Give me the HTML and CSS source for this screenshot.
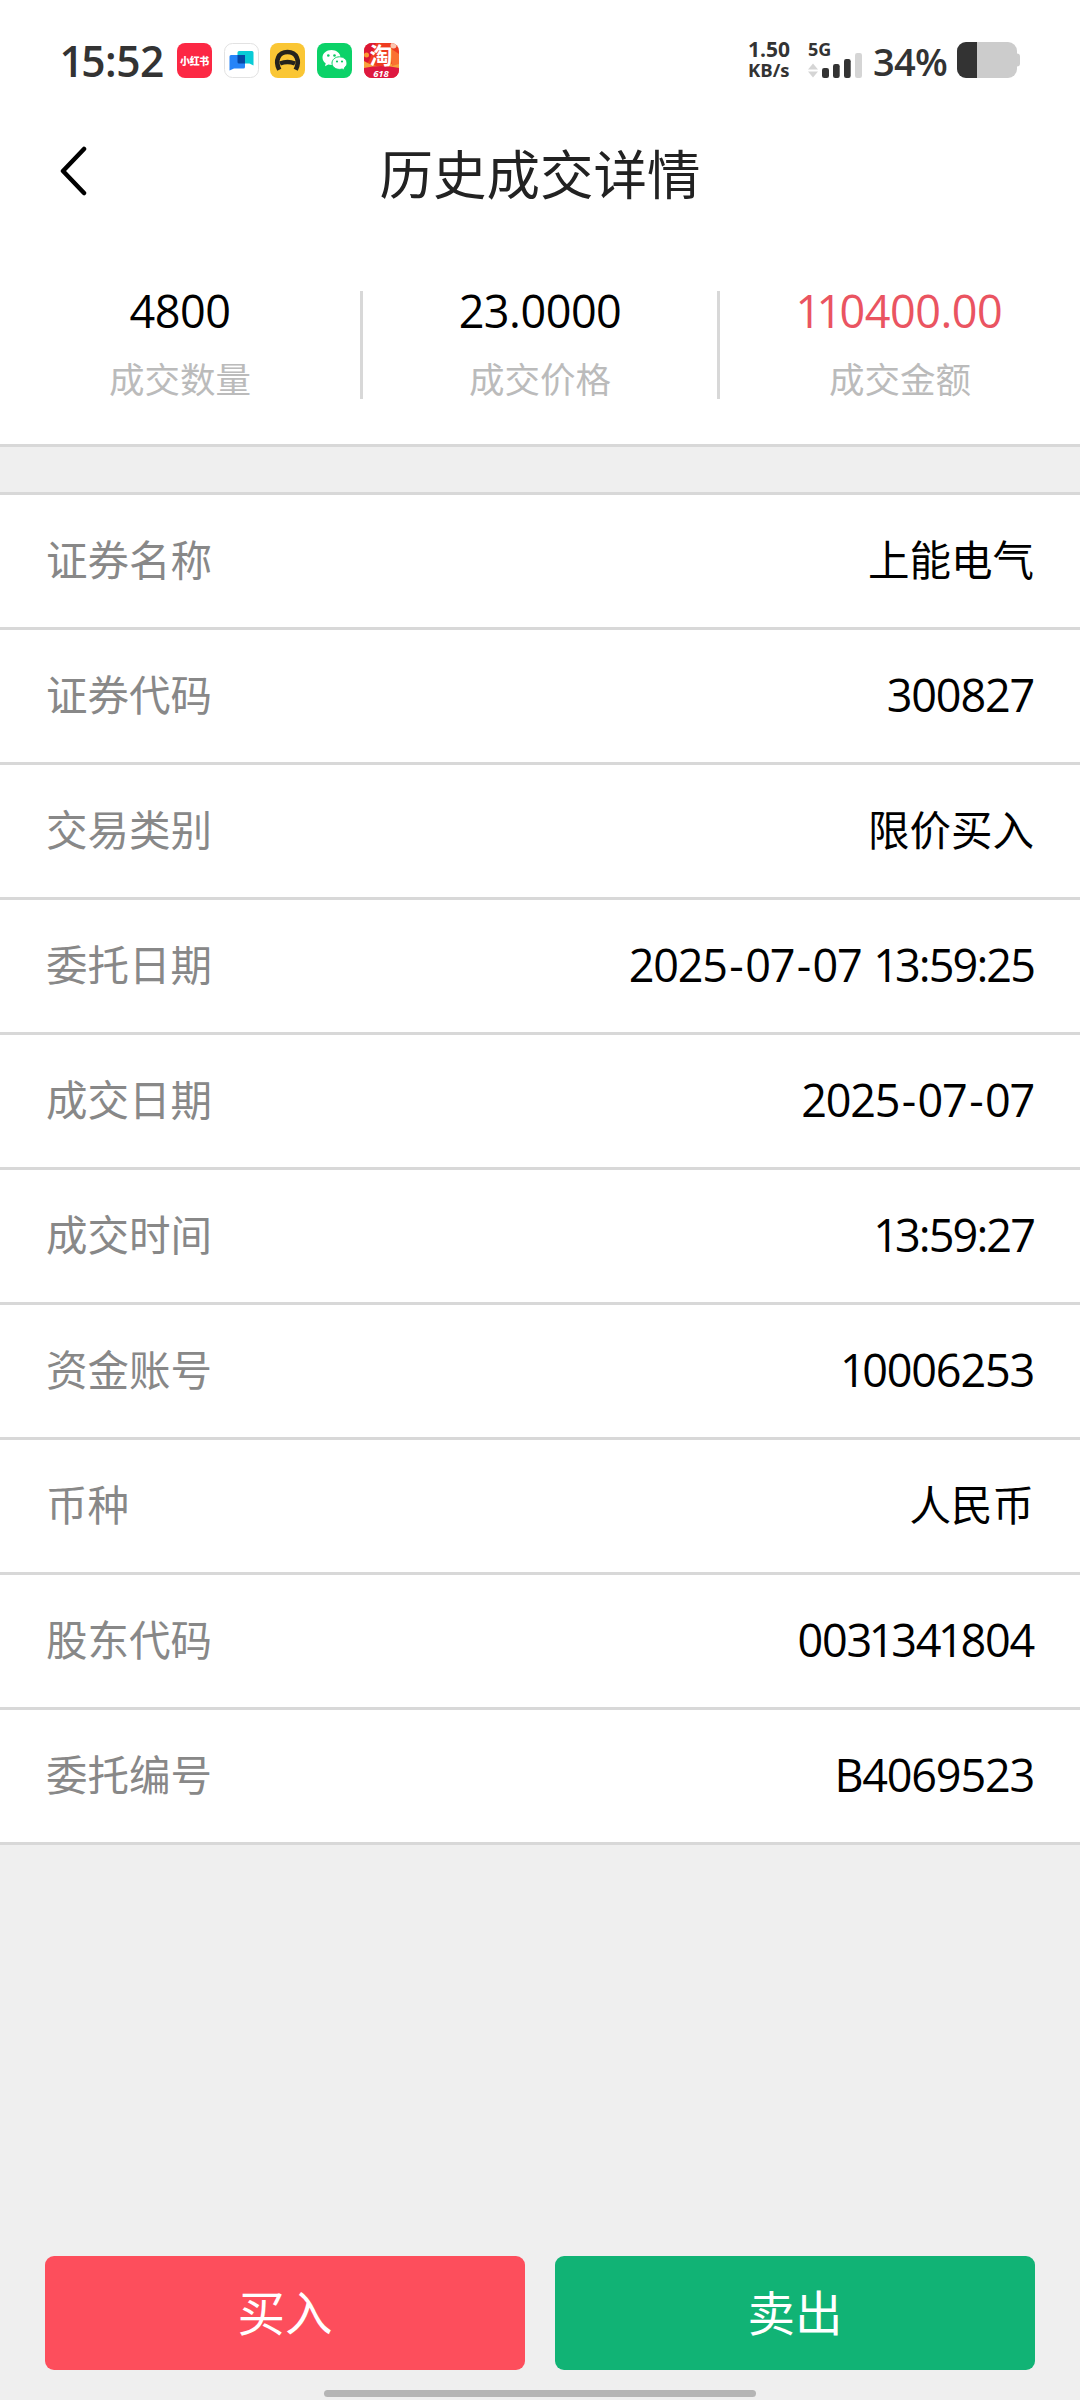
FILE: index.html
```html
<!DOCTYPE html>
<html lang="zh-CN">
<head>
<meta charset="utf-8">
<title>历史成交详情</title>
<link rel="stylesheet" href="styles.css">
</head>
<body>
<div class="top">
  <header class="status">
    <div class="status-left">
      <span class="clock"><i>1</i>5:52</span>
      <div class="apps">
        <svg class="app" viewBox="0 0 35 35"><rect width="35" height="35" rx="8" fill="#fc2844"/><text x="17.500" y="21.600" text-anchor="middle" class="red-note">小红书</text></svg>
        <svg class="app" viewBox="0 0 35 35"><rect x=".5" y=".5" width="34" height="34" rx="8" fill="#fff" stroke="#e2e2e2"/><path d="M15 8h13q1.500 0 1.500 1.500v13L25.500 20.500H15q-1.500 0-1.500-1.500V9.500q0-1.500 1.500-1.500z" fill="#09cbd6"/><path d="M7 12h14v12q0 1.500-1.500 1.500H10L5.500 27.500V13.500q0-1.500 1.500-1.500z" fill="#2684f8"/><path d="M13.500 12H21v8.500h-6q-1.500 0-1.500-1.500z" fill="#0647a4"/></svg>
        <svg class="app" viewBox="0 0 35 35"><rect width="35" height="35" rx="8" fill="#fac634"/><path d="M9.300 26.800C4.500 17.500 8.500 9 17.500 9s13 8.500 8.200 17.800" fill="none" stroke="#25231d" stroke-width="4.600"/><path d="M10 20.500q7.500-3 15 0" fill="none" stroke="#25231d" stroke-width="4.500"/></svg>
        <svg class="app" viewBox="0 0 35 35"><rect width="35" height="35" rx="8" fill="#0bd268"/><path d="M14.500 7C9.500 7 5.500 10.200 5.500 14.500c0 2.400 1.200 4.400 3.200 5.800L8 23.200l3.300-1.700c1 .3 2.100.4 3.200.4 5 0 9-3.200 9-7.400S19.500 7 14.500 7z" fill="#fff"/><path d="M22.500 13.800c-4.200 0-7.500 2.800-7.500 6.300s3.300 6.300 7.500 6.300c.9 0 1.800-.1 2.600-.4l2.700 1.400-.6-2.400c1.700-1.200 2.800-2.900 2.800-4.900 0-3.500-3.300-6.300-7.500-6.300z" fill="#fff" stroke="#0bd268"/><g fill="#0bc964"><circle cx="11.300" cy="12.500" r="1.300"/><circle cx="17.500" cy="12.500" r="1.300"/><circle cx="20" cy="18.500" r="1.100"/><circle cx="25" cy="18.500" r="1.100"/></g></svg>
        <svg class="app" viewBox="0 0 35 35"><defs><clipPath id="tb"><rect width="35" height="35" rx="8"/></clipPath></defs><g clip-path="url(#tb)"><rect width="35" height="35" fill="#ef3c20"/><path d="M0 0h12L5 18 0 22z" fill="#dc1735"/><path d="M0 18Q17 29 35 17v9H0z" fill="#f7a33c"/><path d="M26 5l9 6v10l-7 2z" fill="#fa7130"/><path d="M0 25Q17 21 35 25v10H0z" fill="#de1840"/><circle cx="2.500" cy="12" r="2.500" fill="#fb9935"/><circle cx="29.500" cy="2.500" r="3" fill="#fbc6b0"/></g><text x="17" y="21" text-anchor="middle" class="tao">淘</text><text x="17" y="33.500" text-anchor="middle" class="sale">618</text></svg>
      </div>
    </div>
    <div class="status-right">
      <div class="speed"><span class="rate">1.50</span><span class="unit">KB/s</span></div>
      <div class="network"><span class="gen">5G</span>
        <svg class="signal" viewBox="0 0 54 36"><path d="M5 21.500l5 6H0zM5 35.500l-5-6h10z" fill="#d5d5d5"/><g fill="#333"><rect x="14" y="26" width="7" height="10" rx="2.200"/><rect x="25" y="22" width="6.700" height="14" rx="2.200"/><rect x="36" y="17" width="6.700" height="19" rx="2.200"/></g><rect x="47" y="11" width="7" height="25" rx="2.200" fill="#d5d5d5"/></svg>
      </div>
      <span class="percent">34%</span>
      <svg class="battery" viewBox="0 0 63 36"><rect width="60" height="36" rx="9" fill="#ccc"/><path d="M59 11.500h1q3 0 3 3v7q0 3-3 3h-1z" fill="#ccc"/><path d="M20 0H9a9 9 0 0 0-9 9v18a9 9 0 0 0 9 9h11z" fill="#333"/></svg>
    </div>
  </header>
  <nav class="nav">
    <svg class="back" viewBox="0 0 28 50"><path d="M25 3L4 25l21 22" fill="none" stroke="#000" stroke-width="4.500" stroke-linecap="round" stroke-linejoin="round"/></svg>
    <h1>历史成交详情</h1>
  </nav>
  <section class="summary">
    <div class="stat"><b>4800</b><span>成交数量</span></div>
    <div class="stat middle"><b>23.0000</b><span>成交价格</span></div>
    <div class="stat amount"><b><i>1</i><i>1</i>0400.00</b><span>成交金额</span></div>
  </section>
</div>
<dl class="rows">
  <div class="row"><dt>证券名称</dt><dd class="han">上能电气</dd></div>
  <div class="row"><dt>证券代码</dt><dd>300827</dd></div>
  <div class="row"><dt>交易类别</dt><dd class="han">限价买入</dd></div>
  <div class="row"><dt>委托日期</dt><dd class="moment"><span>2025<u>-</u>07<u>-</u>07</span><span class="time"><i>1</i>3:59:25</span></dd></div>
  <div class="row"><dt>成交日期</dt><dd>2025<u>-</u>07<u>-</u>07</dd></div>
  <div class="row"><dt>成交时间</dt><dd class="time"><i>1</i>3:59:27</dd></div>
  <div class="row"><dt>资金账号</dt><dd><i>1</i>0006253</dd></div>
  <div class="row"><dt>币种</dt><dd class="han">人民币</dd></div>
  <div class="row"><dt>股东代码</dt><dd>003<i>1</i>34<i>1</i>804</dd></div>
  <div class="row"><dt>委托编号</dt><dd>B4069523</dd></div>
</dl>
<footer class="actions">
  <button class="buy">买入</button>
  <button class="sell">卖出</button>
</footer>
<div class="home"></div>
</body>
</html>
```
FILE: styles.css
```css
* { box-sizing: border-box; }
body {
  margin: 0;
  width: 1080px;
  height: 2400px;
  display: flex;
  flex-direction: column;
  overflow: hidden;
  background: #efefef;
  color: #000;
  font-family: "Open Sans", "Noto Sans CJK SC", sans-serif;
}
i, u { font-style: normal; text-decoration: none; }
svg { display: block; }
.top { height: 447px; background: #fff; border-bottom: 3px solid #d8d8d8; }

.status {
  height: 120px;
  padding: 42px 60px 0 61px;
  display: flex;
  justify-content: space-between;
  align-items: flex-start;
  color: #333;
}
.status-left, .status-right { display: flex; height: 36px; align-items: center; }
.clock { width: 116px; padding-top: 2px; font-size: 42.500px; line-height: 36px; font-weight: 600; letter-spacing: -.5px; white-space: nowrap; }
.clock i { margin: 0 -2px 0 -1.500px; }
.apps { display: flex; gap: 11.700px; }
.app { width: 35px; height: 35px; overflow: visible; }
.red-note { font: 900 10px "Noto Sans CJK SC", sans-serif; fill: #fff; letter-spacing: -.4px; }
.tao { font: 700 23px "Noto Sans CJK SC", sans-serif; fill: #fff; }
.sale { font: italic 700 9.500px "Open Sans", sans-serif; fill: #fff; }
.speed { width: 60px; display: flex; flex-direction: column; font-weight: 700; }
.rate { font-size: 21px; line-height: 20px; }
.unit { font-size: 18.500px; line-height: 22px; font-weight: 700; }
.network { width: 65px; display: grid; }
.gen { grid-area: 1 / 1; font-size: 18px; line-height: 14px; font-weight: 700; }
.signal { grid-area: 1 / 1; width: 54px; height: 36px; }
.percent { width: 84px; padding-top: 2px; font-size: 38px; line-height: 36px; font-weight: 600; letter-spacing: -.700px; }
.battery { width: 63px; height: 36px; }

.nav { height: 171px; display: grid; grid-template-columns: 120px 1fr 120px; align-items: start; }
.back { width: 28px; height: 50px; margin: 26px 0 0 59px; }
h1 { margin: 15px 0 0; font-size: 53.500px; line-height: 80px; font-weight: 400; color: #222; text-align: center; }

.summary { height: 108px; display: grid; grid-template-columns: repeat(3, 360px); }
.stat { display: flex; flex-direction: column; align-items: center; }
.middle { border: solid #d8d8d8; border-width: 0 3px; }
.stat b { font-size: 45px; line-height: 40px; font-weight: 400; letter-spacing: -.5px; }
.stat span { margin-top: 28px; font-size: 35.500px; line-height: 40px; color: #bbb; }
.stat i, .row i { margin: 0 -2.200px; }
.amount b { color: #ea5461; }

.rows { margin: 45px 0 0; border-top: 3px solid #d8d8d8; background: #fff; }
.row {
  height: 135px;
  padding: 0 46px 3px;
  display: flex;
  justify-content: space-between;
  align-items: center;
  border-bottom: 3px solid #d8d8d8;
}
dt { font-size: 41.500px; line-height: 60px; color: #888; }
dd { margin: 0; font-size: 45px; line-height: 60px; letter-spacing: -1.200px; }
.row u { margin: 0 2.500px; }
.time { letter-spacing: -1.900px; }
.moment { display: flex; gap: 14px; }
.han { font-size: 41.500px; letter-spacing: 0; }

.actions { margin-top: auto; padding: 0 45px; display: grid; grid-template-columns: 1fr 1fr; gap: 30px; }
button { height: 114px; padding: 0 0 5px; border: 0; border-radius: 9px; color: #fff; font: 400 47.500px/60px "Noto Sans CJK SC", sans-serif; }
.buy { background: #fd4e5c; }
.sell { background: #11b375; }
.home { width: 432px; height: 7px; margin: 20px auto 3px; border-radius: 4px; background: #b5b5b5; }
```
